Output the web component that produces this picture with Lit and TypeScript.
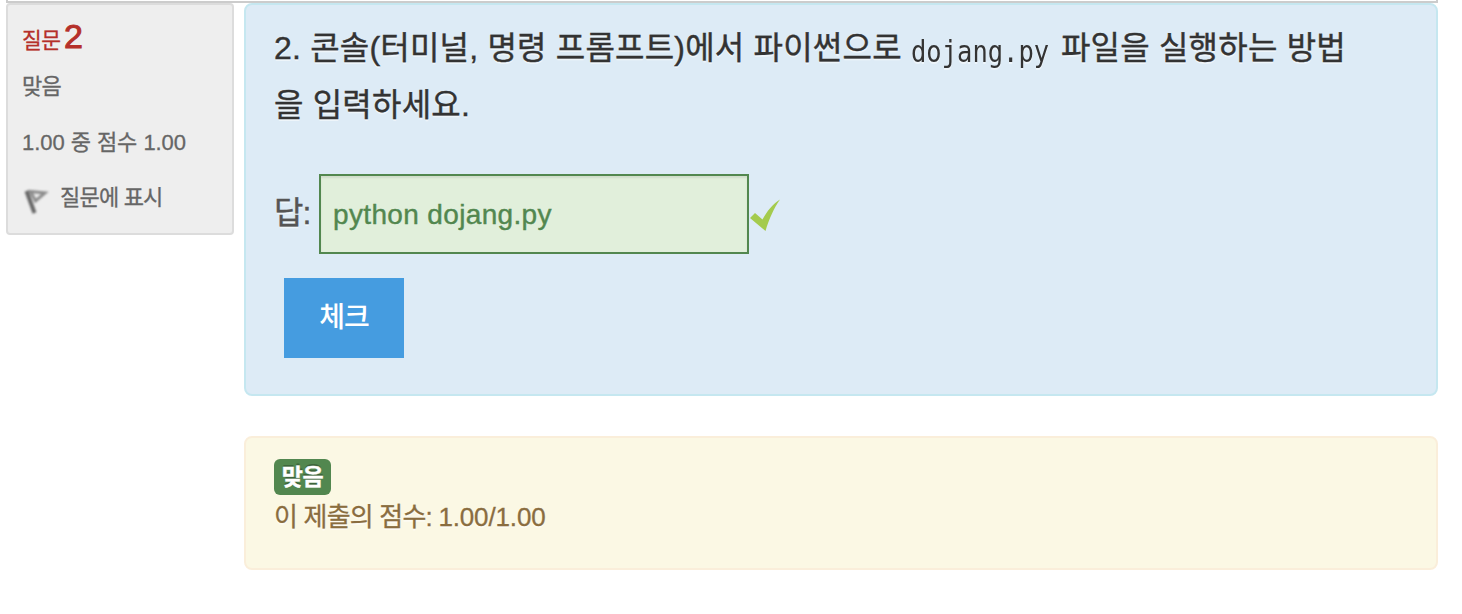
import { LitElement, css, html } from "lit";
import { customElement } from "lit/decorators.js";

@customElement("question-info")
export class QuestionInfo extends LitElement {
  render() {
    return html`
      <h3 class="number">질문 <span class="qno">2</span></h3>
      <div class="state">맞음</div>
      <div class="grade">1.00 중 점수 1.00</div>
      <div class="flag">
        <svg class="flag-icon" width="28" height="30" viewBox="0 0 28 30">
          <path class="cloth" d="M8.5 6.500 L23 8 L13.5 16 Z" />
          <path class="pole" d="M4.5 6 L12.5 28" />
        </svg>
        <span>질문에 표시</span>
      </div>
    `;
  }

  static styles = css`
    :host {
      display: block;
      box-sizing: border-box;
      width: 228px;
      height: 232px;
      padding: 13px 14px 0;
      border: 2px solid #dcdcdc;
      border-radius: 4px;
      background-color: #eee;
      color: #666;
      font-size: 22px;
      line-height: 30px;
      white-space: nowrap;
      -webkit-text-stroke: 0.3px;
    }

    .number {
      margin: 0;
      height: 36px;
      line-height: 36px;
      font-size: 21.5px;
      font-weight: normal;
      letter-spacing: -0.5px;
      color: #b5302a;
    }

    .qno {
      margin-left: -2px;
      font-size: 34px;
      -webkit-text-stroke: 1px;
    }

    .state {
      margin-top: 18px;
      letter-spacing: -0.8px;
    }

    .grade {
      margin-top: 26px;
      letter-spacing: -0.05px;
    }

    .flag {
      display: flex;
      margin-top: 25px;
      letter-spacing: -0.8px;
    }

    .flag-icon {
      margin: 2px 10px 0 0;
      fill: none;
      filter: blur(0.8px);
    }

    .cloth {
      stroke: #8c8c8c;
      stroke-width: 3;
    }

    .pole {
      stroke: #666;
      stroke-width: 4;
    }
  `;
}

@customElement("question-content")
export class QuestionContent extends LitElement {
  render() {
    return html`
      <p class="text">
        2. 콘솔(터미널, 명령 프롬프트)에서 파이썬으로
        <code class="code">dojang.py</code> 파일을 실행하는 방법<br />을
        입력하세요.
      </p>
      <div class="answer">
        <label class="label" for="answer">답:</label>
        <input class="input" id="answer" type="text" value="python dojang.py" readonly />
        <svg class="check" width="32" height="34" viewBox="0 0 32 34">
          <path d="M1 19 L6 14 L13.500 20.500 C18 12 24 5 31 0.5 C25 9 20 20 16.5 32 Z" />
        </svg>
      </div>
      <button class="submit">체크</button>
    `;
  }

  static styles = css`
    :host {
      display: block;
      box-sizing: border-box;
      height: 393px;
      padding: 15px 28px 0;
      border: 2px solid #c5e7f0;
      border-radius: 8px;
      background-color: #ddebf6;
      color: #333;
      text-shadow: 0 2px 0 rgba(255, 255, 255, 0.5);
    }

    .text {
      margin: 0;
      font-size: 32px;
      line-height: 57px;
      letter-spacing: 0.2px;
      white-space: nowrap;
      -webkit-text-stroke: 0.4px;
    }

    .code {
      display: inline-block;
      width: 141px;
      line-height: 40px;
      font-family: "DejaVu Sans Mono", monospace;
      font-size: 30px;
      letter-spacing: 0;
      vertical-align: -3px;
      transform: scaleX(0.85);
      transform-origin: left;
      -webkit-text-stroke: 0;
    }

    .answer {
      display: flex;
      margin-top: 40px;
    }

    .label {
      width: 45px;
      font-size: 32px;
      line-height: 78px;
      letter-spacing: -1px;
      color: #555;
      -webkit-text-stroke: 0.4px;
    }

    .input {
      box-sizing: border-box;
      width: 430px;
      height: 80px;
      margin: 0;
      padding: 2px 12px 0;
      border: 2px solid #52874f;
      border-radius: 0;
      outline: none;
      background-color: #e1efdb;
      box-shadow: inset 0 2px 2px rgba(0, 0, 0, 0.075);
      color: #52874f;
      font-family: inherit;
      font-size: 28px;
      letter-spacing: 0.35px;
      -webkit-text-stroke: 0.4px;
    }

    .check {
      margin-top: 25px;
      fill: #a4cb4d;
    }

    .submit {
      display: block;
      width: 120px;
      height: 80px;
      margin: 24px 0 0 10px;
      padding: 0;
      border: 0;
      background-color: #459ce0;
      color: #fff;
      font-family: inherit;
      font-size: 28px;
      font-weight: 500;
      line-height: 80px;
      letter-spacing: -1px;
    }
  `;
}

@customElement("question-feedback")
export class QuestionFeedback extends LitElement {
  render() {
    return html`
      <span class="badge">맞음</span>
      <div class="score">이 제출의 점수: <span class="mark">1.00/1.00</span></div>
    `;
  }

  static styles = css`
    :host {
      display: flex;
      flex-direction: column;
      align-items: flex-start;
      box-sizing: border-box;
      height: 134px;
      padding: 21px 28px 0;
      border: 2px solid #faeeda;
      border-radius: 8px;
      background-color: #fbf8e4;
      color: #8a6d3f;
      text-shadow: 0 2px 0 rgba(255, 255, 255, 0.5);
    }

    .badge {
      box-sizing: border-box;
      width: 57px;
      height: 36px;
      border-radius: 6px;
      background-color: #52874f;
      color: #fff;
      font-size: 23px;
      font-weight: bold;
      line-height: 36px;
      letter-spacing: -0.5px;
      text-align: center;
      text-shadow: 0 -2px 0 rgba(0, 0, 0, 0.25);
      -webkit-text-stroke: 0.4px;
    }

    .score {
      margin-top: 2px;
      font-size: 26px;
      line-height: 40px;
      letter-spacing: -0.8px;
      white-space: nowrap;
      -webkit-text-stroke: 0.3px;
    }

    .mark {
      letter-spacing: -0.15px;
    }
  `;
}

@customElement("app-root")
export class AppRoot extends LitElement {
  render() {
    return html`
      <div class="previous"></div>
      <div class="question">
        <question-info></question-info>
        <div class="content">
          <question-content></question-content>
          <question-feedback></question-feedback>
        </div>
      </div>
    `;
  }

  static styles = css`
    :host {
      display: block;
      box-sizing: border-box;
      height: 614px;
      padding: 0 24px 0 6px;
      overflow: hidden;
      background-color: #fff;
      font-family: "Liberation Sans", "Noto Sans CJK KR", sans-serif;
    }

    .previous {
      box-sizing: border-box;
      height: 3px;
      border: 2px solid #ccc;
      border-top: 0;
    }

    .question {
      display: flex;
      align-items: flex-start;
      gap: 10px;
    }

    .content {
      display: flex;
      flex: 1;
      flex-direction: column;
      gap: 40px;
    }
  `;
}
